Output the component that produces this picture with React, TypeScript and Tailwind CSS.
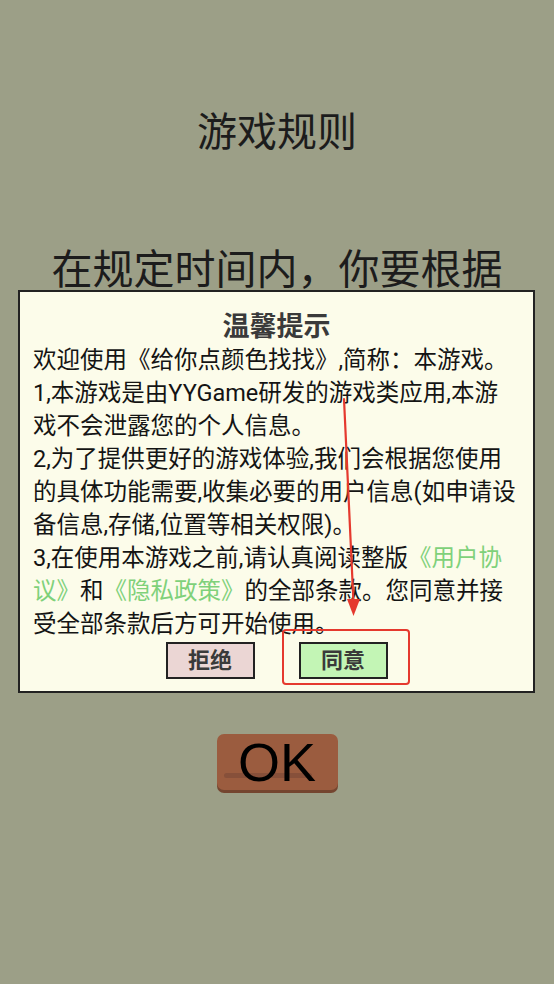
export default function App() {
  const cjk = "font-['Roboto','Noto_Sans_CJK_SC',sans-serif]";
  const link = "text-[#7fd17a]";

  return (
    <div className={`relative w-full h-[984px] overflow-hidden bg-[#9c9f87] ${cjk}`}>
      {/* Rules page behind the dialog */}
      <div className="flex flex-col items-center">
        <h1 className="pt-[109px] text-[40px] leading-[48px] font-normal text-[#1c1c1c]">游戏规则</h1>
        <p className="mt-[89px] text-[41px] leading-[48px] text-[#1c1c1c] whitespace-nowrap">在规定时间内，你要根据</p>
        <button className="relative mt-[440px] w-[121px] h-[56px] rounded-[7px] bg-[#9b5c3f] shadow-[0_3px_0_#74452f] flex items-center justify-center">
          <span className="absolute left-[7px] bottom-[12px] w-[88px] h-[5px] rounded-full bg-[#87503a]" />
          <span className="relative font-['Liberation_Sans',Arial,sans-serif] text-[54px] leading-none text-black">OK</span>
        </button>
      </div>

      {/* Privacy dialog */}
      <div className="absolute left-[18px] top-[290px] w-[517px] h-[403px] border-2 border-[#222] bg-[#fcfcea] px-[13px] pt-[18px]">
        <h2 className="text-center text-[27px] leading-[34px] font-bold text-[#3a3a3a]">温馨提示</h2>
        <div className="text-[23.5px] leading-[33px] text-[#141414] whitespace-nowrap">
          <div>欢迎使用《给你点颜色找找》,简称：本游戏。</div>
          <div>1,本游戏是由YYGame研发的游戏类应用,本游</div>
          <div>戏不会泄露您的个人信息。</div>
          <div>2,为了提供更好的游戏体验,我们会根据您使用</div>
          <div>的具体功能需要,收集必要的用户信息(如申请设</div>
          <div>备信息,存储,位置等相关权限)。</div>
          <div>
            3,在使用本游戏之前,请认真阅读整版<span className={link}>《用户协</span>
          </div>
          <div>
            <span className={link}>议》</span>和<span className={link}>《隐私政策》</span>的全部条款。您同意并接
          </div>
          <div>受全部条款后方可开始使用。</div>
        </div>
        <div className="mt-px flex justify-center gap-[44px]">
          <button className="w-[89px] h-[37px] border-2 border-[#222] bg-[#ebd6d4] text-[22px] font-bold text-[#3a3a3a] leading-none">拒绝</button>
          <button className="w-[89px] h-[37px] border-2 border-[#222] bg-[#c3f5b5] text-[22px] font-bold text-[#3a3a3a] leading-none">同意</button>
        </div>
      </div>

      {/* Annotation: red arrow and highlight box */}
      <svg className="absolute left-[330px] top-[395px]" width="36" height="226" viewBox="0 0 36 226">
        <path d="M14 4 L23.5 208" stroke="#e5392e" strokeWidth="2.2" strokeLinecap="round" fill="none" />
        <path d="M17 204 L30 204 L23.5 221 Z" fill="#e5392e" />
      </svg>
      <div className="absolute left-[282px] top-[629px] w-[128px] h-[56px] border-2 border-[#e5392e] rounded-[4px]" />
    </div>
  );
}
